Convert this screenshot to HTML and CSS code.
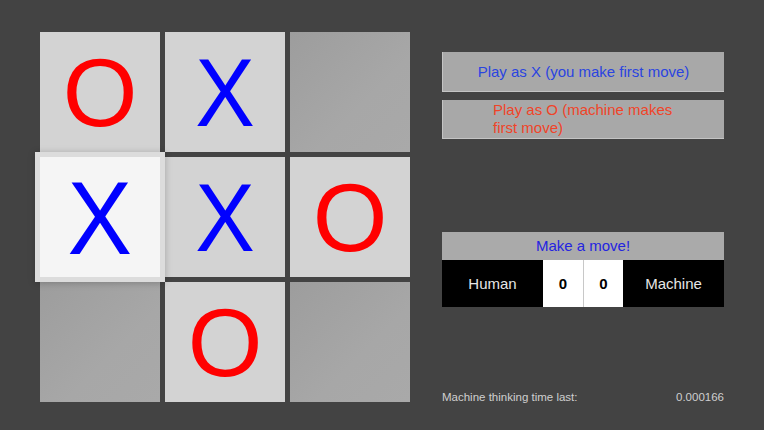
FILE: index.html
```html
<!DOCTYPE html>
<html>
<head>
<meta charset="utf-8">
<link rel="stylesheet" href="styles.css">
</head>
<body>
<div class="app">
  <div class="board">
    <div class="cell filled"><span class="o">O</span></div>
    <div class="cell filled"><span class="x">X</span></div>
    <div class="cell empty"></div>
    <div class="cell selected"><span class="x">X</span></div>
    <div class="cell filled"><span class="x">X</span></div>
    <div class="cell filled"><span class="o">O</span></div>
    <div class="cell empty"></div>
    <div class="cell filled"><span class="o">O</span></div>
    <div class="cell empty"></div>
  </div>
  <div class="panel">
    <button class="btn btn-x"><span class="label">Play as X (you make first move)</span></button>
    <button class="btn btn-o"><span class="label">Play as O (machine makes first move)</span></button>
    <div class="status">
      <div class="status-head">Make a move!</div>
      <div class="score">
        <div class="name">Human</div>
        <div class="num">0</div>
        <div class="num">0</div>
        <div class="name">Machine</div>
      </div>
    </div>
    <div class="footer">
      <span>Machine thinking time last:</span>
      <span>0.000166</span>
    </div>
  </div>
</div>
</body>
</html>
```

FILE: styles.css
```css
html, body {
  margin: 0;
  padding: 0;
  background: #434343;
  width: 764px;
  height: 430px;
  overflow: hidden;
  font-family: "Liberation Sans", Arial, sans-serif;
}

.app {
  display: flex;
  padding: 32px 0 0 40px;
}

.board {
  display: grid;
  grid-template-columns: repeat(3, 120px);
  grid-template-rows: repeat(3, 120px);
  gap: 5px;
}

.cell {
  display: flex;
  align-items: center;
  justify-content: center;
  font-size: 96px;
  line-height: 1;
}

.cell span {
  display: block;
  margin-top: 2px;
}

.x {
  transform: scaleX(0.93);
}

.filled {
  background: #d3d3d3;
}

.empty {
  background: linear-gradient(135deg, #9d9d9d 0%, #a7a7a7 60%, #a9a9a9 100%);
}

.selected {
  position: relative;
  z-index: 2;
  background: #f5f5f5;
  font-size: 104px;
  box-shadow: 0 0 0 5px #dcdcdc, 0 1px 7px 5px rgba(0, 0, 0, 0.22);
}

.x {
  color: #0000ff;
}

.o {
  color: #ff0000;
}

.panel {
  display: flex;
  flex-direction: column;
  width: 282px;
  margin-left: 32px;
}

.btn {
  display: flex;
  align-items: center;
  justify-content: center;
  width: 282px;
  height: 40px;
  margin: 0;
  padding: 0;
  border: none;
  border-left: 1px solid #c4c4c4;
  border-bottom: 1px solid #c4c4c4;
  background: #a8a8a8;
  font-family: "Liberation Sans", Arial, sans-serif;
  font-size: 15px;
  line-height: 18px;
}

.btn-x {
  margin-top: 20px;
  color: #2a44e0;
}

.btn-o {
  margin-top: 8px;
  height: 39px;
  padding-left: 50px;
  justify-content: flex-start;
  color: #f04428;
}

.btn-o .label {
  display: block;
  width: 200px;
  text-align: left;
}

.status {
  margin-top: 93px;
}

.status-head {
  height: 28px;
  line-height: 28px;
  background: #aaaaaa;
  text-align: center;
  color: #2424e0;
  font-size: 15px;
}

.score {
  display: flex;
  height: 47px;
  background: #000;
}

.name {
  flex: 1;
  display: flex;
  align-items: center;
  justify-content: center;
  color: #e6e6e6;
  font-size: 15px;
}

.num {
  width: 40px;
  display: flex;
  align-items: center;
  justify-content: center;
  background: #fff;
  color: #000;
  font-weight: bold;
  font-size: 15px;
}

.num + .num {
  border-left: 1px solid #c8c8c8;
  width: 39px;
}

.footer {
  display: flex;
  justify-content: space-between;
  margin-top: 84px;
  color: #cfcfcf;
  font-size: 11.5px;
  line-height: 13px;
}
```
